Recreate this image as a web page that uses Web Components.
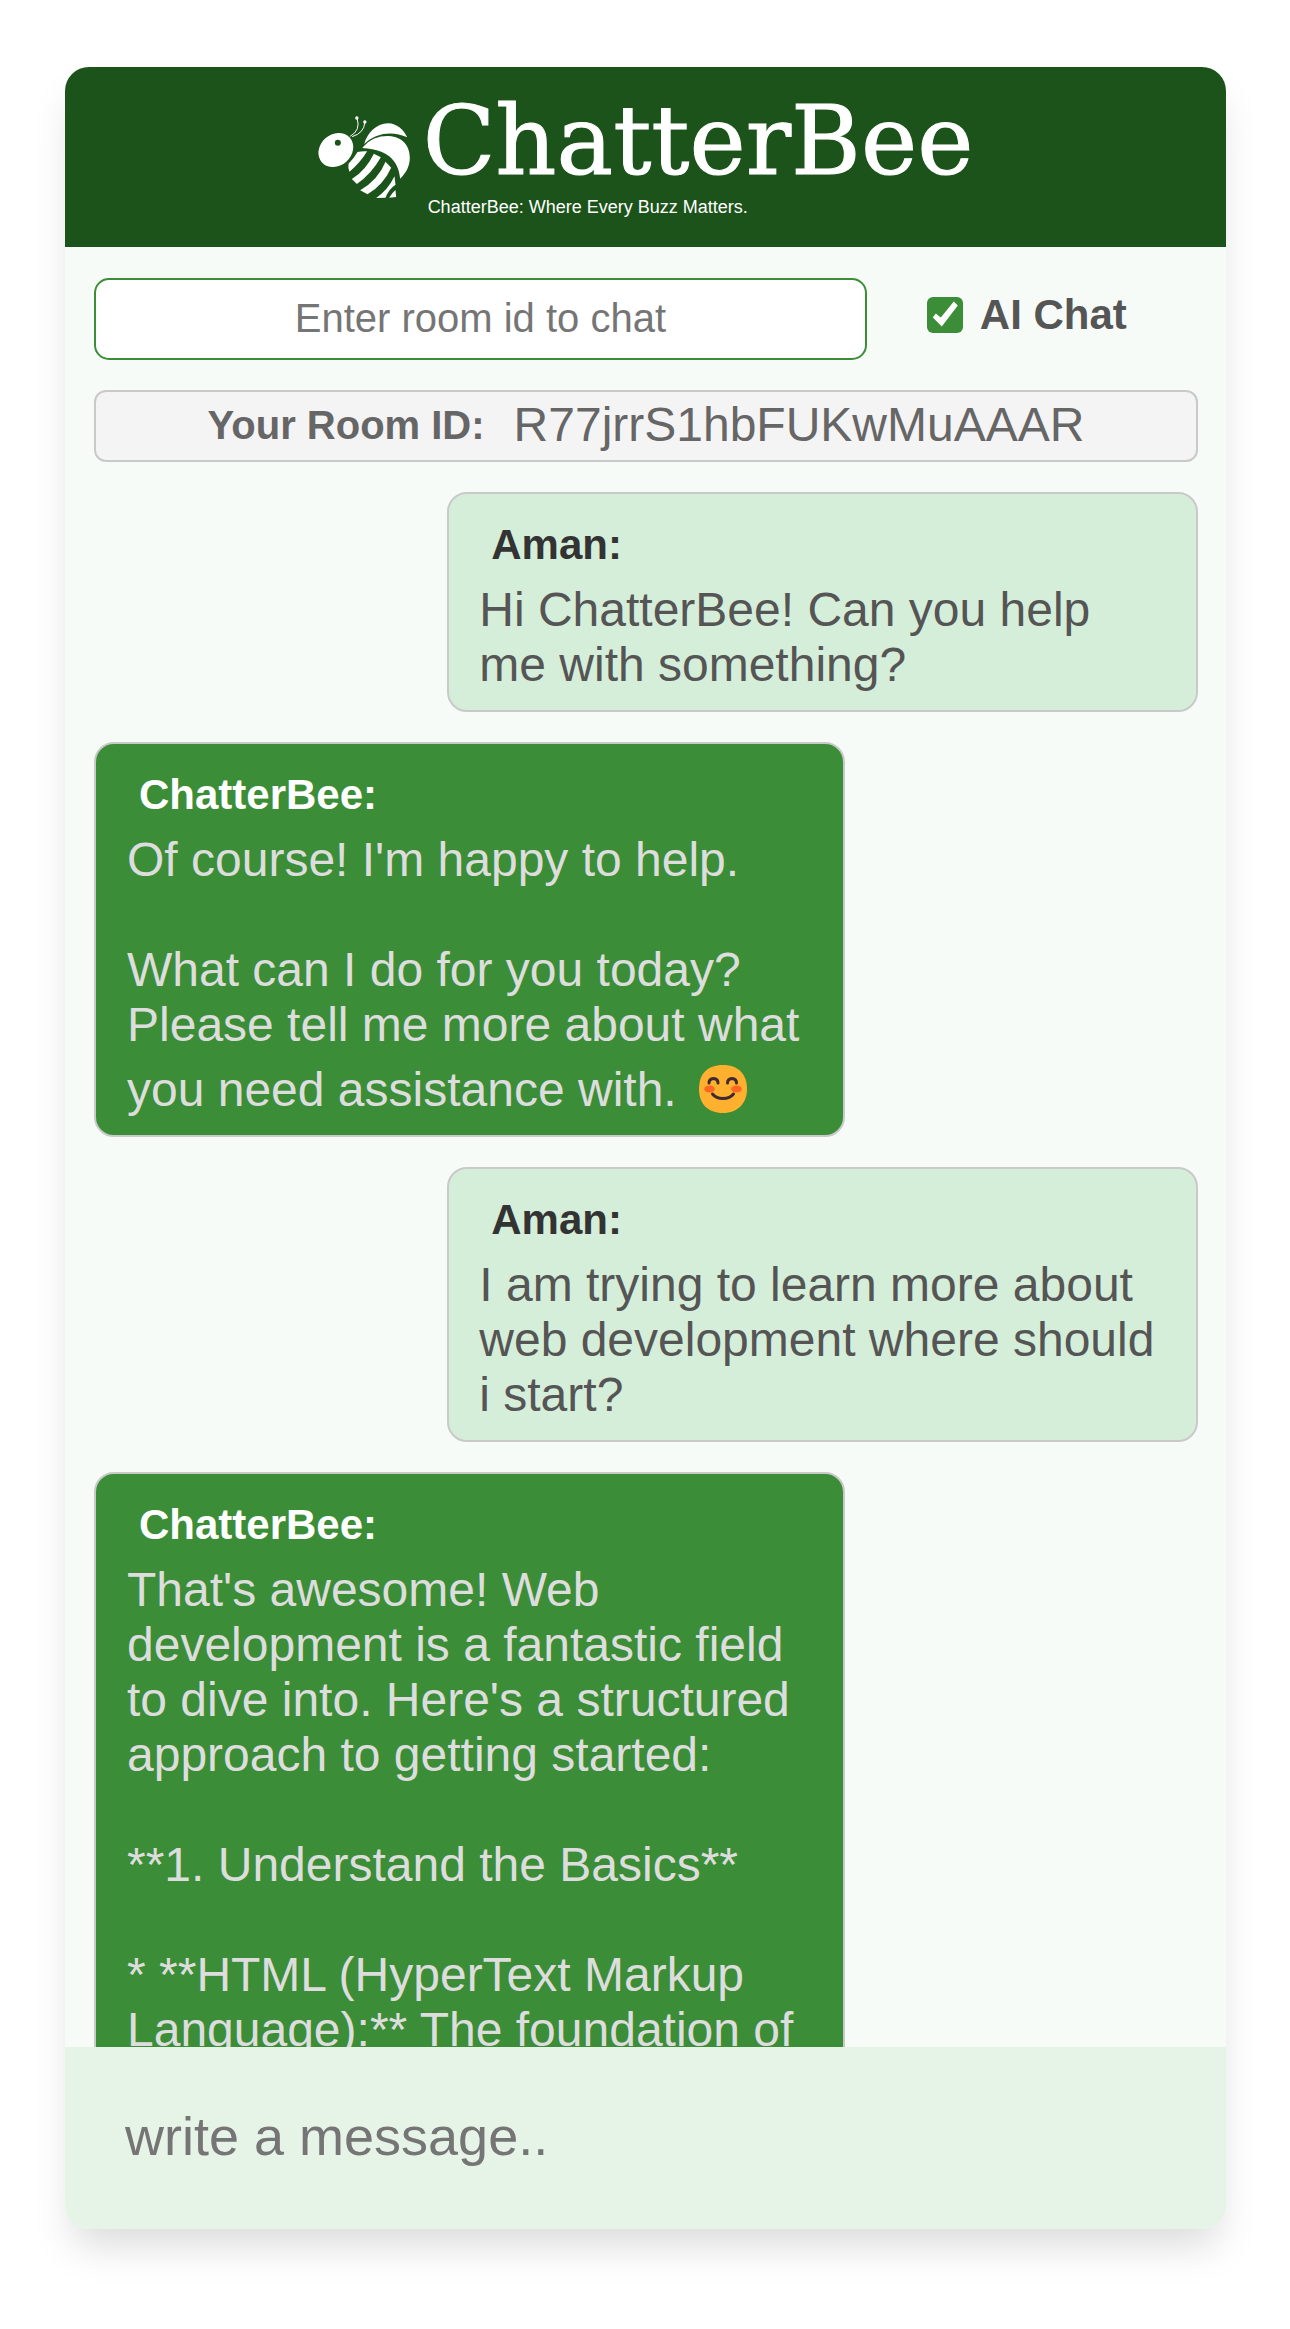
<!DOCTYPE html>
<html lang="en">
<head>
<meta charset="utf-8">
<meta name="viewport" content="width=device-width, initial-scale=1">
<title>ChatterBee</title>
<style>
  body {
    margin: 0;
    background: #fff;
    font-family: "Liberation Sans", Arial, sans-serif;
    --forest: #1b531a;
    --leaf: #3b8e37;
    --mist: #f6fbf7;
    --mint: #d5eed9;
    --line: #c9c9c9;
  }
</style>
</head>
<body>
<chat-app>
  <chat-brand slot="header" tagline="ChatterBee: Where Every Buzz Matters.">ChatterBee</chat-brand>
  <room-form></room-form>
  <room-id>R77jrrS1hbFUKwMuAAAR</room-id>
  <chat-message author="Aman" own>Hi ChatterBee! Can you help me with something?</chat-message>
  <chat-message author="ChatterBee">Of course! I'm happy to help.

What can I do for you today? Please tell me more about what you need assistance with. <smile-icon></smile-icon></chat-message>
  <chat-message author="Aman" own>I am trying to learn more about web development where should i start?</chat-message>
  <chat-message author="ChatterBee">That's awesome! Web development is a fantastic field to dive into. Here's a structured approach to getting started:

**1. Understand the Basics**

* **HTML (HyperText Markup Language):** The foundation of</chat-message>
  <message-composer slot="footer"></message-composer>
</chat-app>

<script>
  const define = (name, html, setup) => {
    const template = document.createElement('template');
    template.innerHTML = html.trim();
    customElements.define(name, class extends HTMLElement {
      connectedCallback() {
        if (this.shadowRoot) return;
        const root = this.attachShadow({ mode: 'open' });
        root.append(template.content.cloneNode(true));
        if (setup) setup(this, root);
      }
    });
  };

  define('chat-app', `
    <style>
      :host {
        display: flex; flex-direction: column; box-sizing: border-box;
        height: calc(100vh - 167px);
        margin: 67px 64px 100px 65px;
        border-radius: 24px; overflow: hidden;
        background: var(--mist);
        box-shadow: 0 24px 40px -8px rgba(0, 0, 0, .15);
      }
      header, footer { flex: none; }
      main {
        flex: 1; min-height: 0; overflow: hidden;
        display: flex; flex-direction: column; gap: 30px;
        padding: 31px 28px 0 29px;
      }
      ::slotted(*) { flex: none; }
    </style>
    <header><slot name="header"></slot></header>
    <main><slot></slot></main>
    <footer><slot name="footer"></slot></footer>`);

  define('chat-brand', `
    <style>
      :host {
        display: flex; align-items: center; justify-content: center; gap: 12px;
        padding: 24px; background: var(--forest); color: #fff;
      }
      svg { flex: none; width: 93px; height: 83px; fill: currentColor; }
      h1 { margin: 0; font: 400 95px/100px "DejaVu Serif", serif; -webkit-text-stroke: 1px currentColor; }
      p { margin: 0 0 0 5px; font: 400 18px/32px "Liberation Sans", sans-serif; }
      .feeler { fill: none; stroke: currentColor; stroke-width: 3; }
      .eye { fill: var(--forest); }
    </style>
    <svg viewBox="28 33 278 249" aria-hidden="true">
      <ellipse cx="81" cy="135" rx="56" ry="47" transform="rotate(-42 81 135)"/>
      <circle class="eye" cx="87" cy="113" r="9"/>
      <path class="feeler" d="M124 94Q156 76 145 40M130 95Q166 84 168 52"/>
      <circle cx="144" cy="39" r="5"/><circle cx="168" cy="51" r="5"/>
      <path d="M166 117C176 84 202 55 238 55C264 56 283 72 295 97C254 78 205 80 166 117Z"/>
      <path d="M160 129C184 100 212 92 240 93C282 95 304 125 303 160C302 187 290 206 274 221C270 180 250 133 160 129Z"/>
      <path d="M146 141Q160 138 175 139Q153 175 122 200Q117 188 119 176Q134 162 146 141Z"/>
      <path d="M195 146L216 157Q188 207 144 237L129 222Q172 195 195 146Z"/>
      <path d="M230 170L247 188Q224 239 176 268L154 256Q209 223 230 170Z"/>
      <path d="M257 214L260 239Q239 253 230 278L202 279Q237 255 257 214Z"/>
      <path d="M260 255L262 276L241 278Q249 264 260 255Z"/>
    </svg>
    <div><h1><slot></slot></h1><p></p></div>`,
    (host, root) => { root.querySelector('p').textContent = host.getAttribute('tagline'); });

  define('room-form', `
    <style>
      :host { display: block; }
      form { display: flex; align-items: center; gap: 60px; margin: 0; }
      [type="text"] {
        flex: none; box-sizing: border-box; width: 70%; height: 82px; margin: 0; padding: 0 20px 2px;
        border: 2px solid var(--leaf); border-radius: 15px; background: #fff;
        font: 40px "Liberation Sans", Arial, sans-serif; text-align: center; color: #555;
      }
      ::placeholder { color: #757575; opacity: 1; }
      label {
        display: flex; align-items: center; gap: 17px; padding-bottom: 9px;
        font-size: 42px; line-height: 48px; font-weight: 700; color: #555; white-space: nowrap;
      }
      [type="checkbox"] {
        appearance: none; box-sizing: border-box; width: 36px; height: 36px; margin: 0;
        border: 2px solid var(--leaf); border-radius: 6px; background: #fff;
      }
      [type="checkbox"]:checked { border: 0; background: var(--leaf); }
      [type="checkbox"]:checked::before {
        content: ""; display: block; width: 100%; height: 100%; background: #fff;
        clip-path: polygon(6px 21px, 9px 17px, 14px 21px, 27px 5px, 31px 9px, 15px 30px);
      }
    </style>
    <form>
      <input type="text" placeholder="Enter room id to chat" aria-label="Room id">
      <label><input type="checkbox" checked>AI Chat</label>
    </form>`);

  define('room-id', `
    <style>
      :host {
        display: flex; align-items: center; justify-content: center; gap: 29px;
        box-sizing: border-box; height: 72px; padding-bottom: 3px;
        border: 2px solid var(--line); border-radius: 12px;
        background: #f5f4f5; color: #666;
      }
      strong { font-size: 40px; line-height: 46px; }
      span { font-size: 48px; line-height: 55px; }
    </style>
    <strong>Your Room ID:</strong>
    <span><slot></slot></span>`);

  define('chat-message', `
    <style>
      :host {
        display: block; box-sizing: border-box; width: 68%; align-self: flex-start;
        padding: 27px 31px 18px; border: 2px solid var(--line); border-radius: 20px;
        background: var(--leaf); color: #ddd;
      }
      :host([own]) { align-self: flex-end; padding-left: 30px; background: var(--mint); color: #555; }
      h2 { margin: 0 0 13px 12px; font-size: 42px; line-height: 48px; color: #fff; }
      :host([own]) h2 { color: #333; }
      p { margin: 0; font-size: 48px; line-height: 55px; white-space: pre-wrap; }
    </style>
    <h2></h2>
    <p><slot></slot></p>`,
    (host, root) => { root.querySelector('h2').textContent = host.getAttribute('author') + ':'; });

  define('smile-icon', `<style>
      :host { display: inline; }
      svg { width: 48px; height: 48px; margin: 13px 0 0 9px; vertical-align: -7px; }
    </style><svg viewBox="0 0 48 48" role="img" aria-label="smiling face"><path fill="#ffb02e" d="M24 0C40 0 48 10 48 24S39 48 24 48S0 39 0 24S8 0 24 0Z"/><ellipse cx="10.500" cy="24" rx="5.300" ry="3.500" fill="#ff6723"/><ellipse cx="37.500" cy="24" rx="5.300" ry="3.500" fill="#ff6723"/><path fill="none" stroke="#402a32" stroke-width="3" stroke-linecap="round" d="M10 18Q10 14 14.500 13.500Q19 14 19 18M28.500 18Q28.500 14 33 13.500Q37.500 14 37.500 18M13.500 29Q17 33.500 24 33.500T34.500 29"/></svg>`);

  define('message-composer', `
    <style>
      :host { display: block; background: #e6f4e7; }
      input {
        display: block; box-sizing: border-box; width: 100%; height: 182px; margin: 0;
        padding: 0 60px 4px; border: 0; background: none;
        font: 54px "Liberation Sans", Arial, sans-serif; color: #555;
      }
      ::placeholder { color: #757575; opacity: 1; }
    </style>
    <input type="text" placeholder="write a message.." aria-label="Message">`);
</script>
</body>
</html>
